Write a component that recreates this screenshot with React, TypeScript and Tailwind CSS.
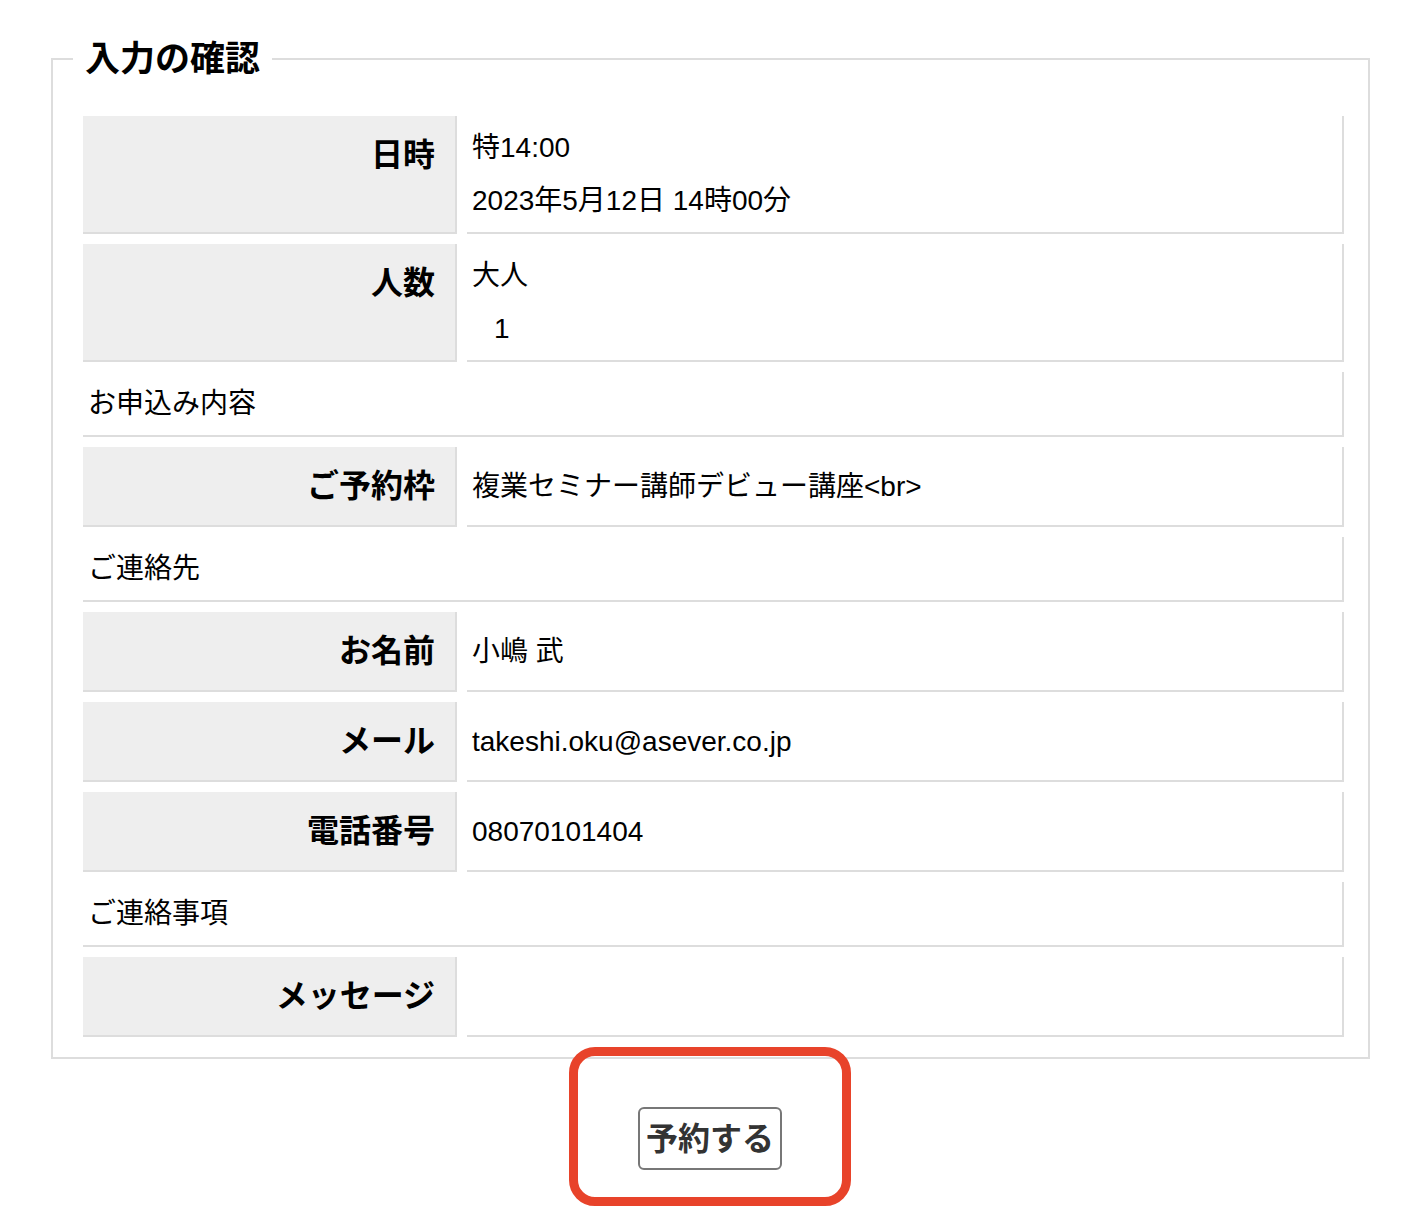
const font = { fontFamily: '"Liberation Sans", "Noto Sans CJK JP", sans-serif' };

function Row({ label, children }: { label: string; children?: React.ReactNode }) {
  return (
    <tr>
      <th className="w-[374px] bg-[#eeeeee] border-r-2 border-b-2 border-[#dddddd] pr-[20px] pt-[15px] pb-[15px] text-right align-top text-[32px] leading-[48px] font-bold text-black">
        {label}
      </th>
      <td className="border-r-2 border-b-2 border-[#dddddd] px-[5px] py-[5px] align-middle text-[28px] leading-[53px] text-black">
        {children}
      </td>
    </tr>
  );
}

function Heading({ text }: { text: string }) {
  return (
    <tr>
      <td colSpan={2} className="border-r-2 border-b-2 border-[#dddddd] px-[5px] py-[5px] text-left text-[28px] leading-[53px] text-black">
        {text}
      </td>
    </tr>
  );
}

export default function App() {
  return (
    <div className="relative w-[1426px] h-[1224px] bg-white pt-[33px]" style={font}>
      <fieldset className="ml-[51px] w-[1318px] border-2 border-[#dddddd] pl-[20px] pr-[14px] pt-[21px] pb-[10px]">
        <legend className="px-[12px] text-[35px] leading-[52px] font-bold text-black">入力の確認</legend>
        <table className="w-[1281px] table-fixed border-separate border-spacing-[10px]">
          <colgroup>
            <col className="w-[374px]" />
            <col />
          </colgroup>
          <tbody>
            <Row label="日時">
              <div>特14:00</div>
              <div>2023年5月12日 14時00分</div>
            </Row>
            <Row label="人数">
              <div>大人</div>
              <div className="pl-[22px]">1</div>
            </Row>
            <Heading text="お申込み内容" />
            <Row label="ご予約枠">複業セミナー講師デビュー講座&lt;br&gt;</Row>
            <Heading text="ご連絡先" />
            <Row label="お名前">小嶋 武</Row>
            <Row label="メール">takeshi.oku@asever.co.jp</Row>
            <Row label="電話番号">08070101404</Row>
            <Heading text="ご連絡事項" />
            <Row label="メッセージ" />
          </tbody>
        </table>
      </fieldset>
      <div className="flex justify-center pt-[48px] pr-[6px]">
        <button className="h-[63px] px-[6px] border-2 border-[#777777] rounded-[6px] bg-white text-[32px] leading-[40px] font-bold text-[#333333]">
          予約する
        </button>
      </div>
      <div className="absolute left-[569px] top-[1047px] w-[282px] h-[159px] border-[9px] border-[#e8432a] rounded-[26px] pointer-events-none" />
    </div>
  );
}
